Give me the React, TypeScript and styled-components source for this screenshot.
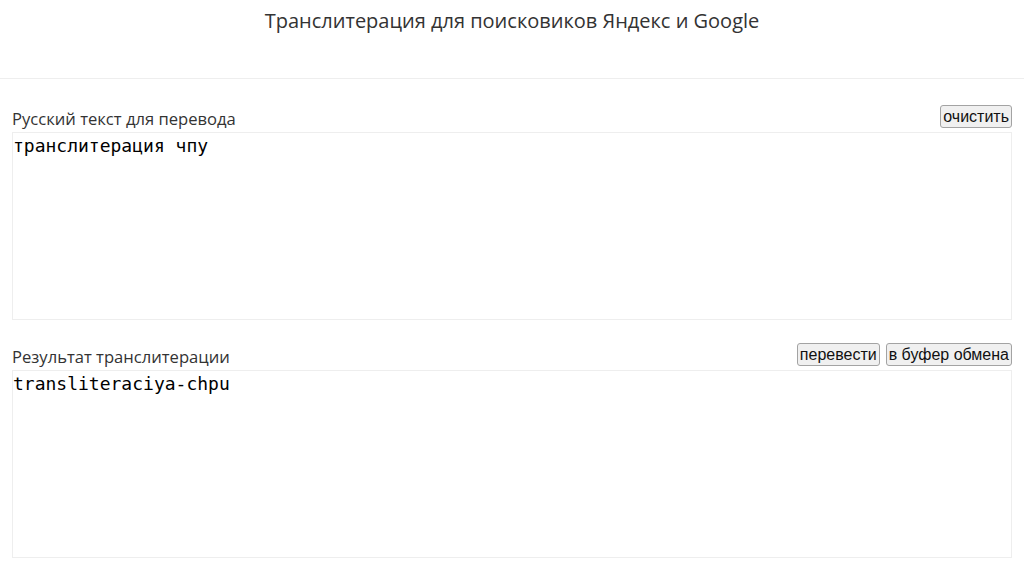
import React, { useState } from "react";
import styled, { createGlobalStyle } from "styled-components";

const GlobalStyle = createGlobalStyle`
  body {
    margin: 0;
    background: #ffffff;
    color: #333333;
    font-family: "Open Sans", "Noto Sans", sans-serif;
  }
`;

const Header = styled.header`
  height: 78px;
  border-bottom: 1px solid #eeeeee;
  display: flex;
  justify-content: center;
  align-items: flex-start;
`;

const Title = styled.h1`
  margin: 7px 0 0;
  font-size: 20px;
  font-weight: 400;
  line-height: 27px;
  color: #333333;
`;

const Main = styled.main`
  padding: 25px 12px 0;
  display: flex;
  flex-direction: column;
  gap: 22px;
`;

const Section = styled.section`
  display: flex;
  flex-direction: column;
`;

const LabelRow = styled.div`
  display: flex;
  justify-content: space-between;
  align-items: flex-end;
  height: 28px;
`;

const Label = styled.label`
  font-size: 16.6px;
  line-height: 20px;
  margin-bottom: 3px;
  color: #333333;
`;

const Buttons = styled.div`
  display: flex;
  gap: 6px;
  margin-bottom: 4px;
`;

const Button = styled.button`
  font-family: "Liberation Sans", Arial, sans-serif;
  font-size: 16px;
  line-height: 19px;
  color: #111111;
  background: #f0f0f0;
  border: 1px solid #a3a3a3;
  border-radius: 3px;
  padding: 1px 2px;
  height: 23px;
  cursor: pointer;
`;

const TextArea = styled.textarea`
  display: block;
  box-sizing: border-box;
  width: 100%;
  height: ${(p: { $h: number }) => p.$h}px;
  margin: 0;
  padding: 0;
  border: 1px solid #eeeeee;
  resize: none;
  outline: none;
  font-family: "DejaVu Sans Mono", monospace;
  font-size: 18px;
  line-height: 25px;
  color: #000000;
  background: #ffffff;
`;

export default function App() {
  const [source, setSource] = useState("транслитерация чпу");
  const [result, setResult] = useState("transliteraciya-chpu");

  return (
    <>
      <GlobalStyle />
      <Header>
        <Title>Транслитерация для поисковиков Яндекс и Google</Title>
      </Header>
      <Main>
        <Section>
          <LabelRow>
            <Label htmlFor="src">Русский текст для перевода</Label>
            <Buttons>
              <Button onClick={() => setSource("")}>очистить</Button>
            </Buttons>
          </LabelRow>
          <TextArea
            id="src"
            $h={188}
            value={source}
            onChange={(e) => setSource(e.target.value)}
          />
        </Section>
        <Section>
          <LabelRow>
            <Label htmlFor="dst">Результат транслитерации</Label>
            <Buttons>
              <Button>перевести</Button>
              <Button>в буфер обмена</Button>
            </Buttons>
          </LabelRow>
          <TextArea
            id="dst"
            $h={188}
            value={result}
            onChange={(e) => setResult(e.target.value)}
          />
        </Section>
      </Main>
    </>
  );
}
